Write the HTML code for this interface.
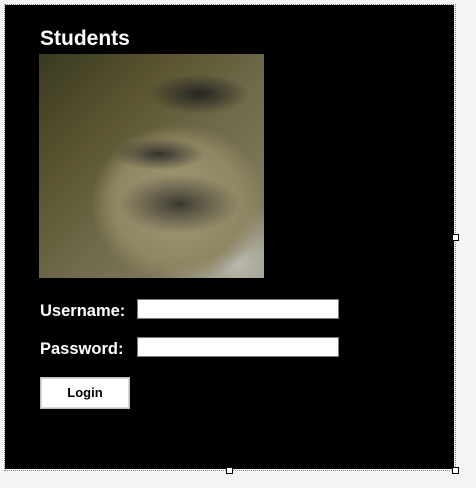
<!DOCTYPE html>
<html><head><meta charset="utf-8"><style>
html,body{margin:0;padding:0;}
body{width:476px;height:488px;background:#f4f4f4;position:relative;overflow:hidden;font-family:"Liberation Sans",Arial,sans-serif;}
.frame{position:absolute;left:4px;top:4px;width:450px;height:465px;border:1px dotted #888;}
.panel{position:absolute;left:5px;top:5px;width:449px;height:464px;background:#000;}
.h{position:absolute;left:40px;top:27px;color:#fff;font-weight:bold;font-size:21px;}
.img{position:absolute;left:39px;top:54px;width:225px;height:224px;
background:
radial-gradient(ellipse 60px 30px at 140px 150px, rgba(40,40,35,.85), transparent),
radial-gradient(ellipse 50px 20px at 160px 40px, rgba(30,30,30,.9), transparent),
radial-gradient(ellipse 45px 16px at 120px 100px, rgba(35,35,32,.85), transparent),
radial-gradient(ellipse 110px 100px at 140px 150px, #a59a78 0%, #8f8563 60%, transparent 80%),
radial-gradient(ellipse 80px 60px at 200px 210px, #b9b9b0, transparent),
linear-gradient(135deg,#3a3a22 0%,#5a5430 30%,#6f6a4a 55%,#8a8466 100%);}
.l{position:absolute;left:40px;color:#fff;font-weight:bold;font-size:16.5px;}
.in{position:absolute;left:137px;width:200px;height:18px;background:#fff;border:1px solid #7a7a7a;}
.btn{position:absolute;left:40px;top:377px;width:90px;height:32px;background:#fff;border:2px solid #d8d8d8;outline:1px solid #bdbdbd;outline-offset:-1px;box-sizing:border-box;text-align:center;line-height:28px;font-weight:bold;font-size:13px;color:#000;}
.hd{position:absolute;width:5px;height:5px;background:#fff;border:1px solid #000;}
</style></head><body>
<div class="frame"></div>
<div class="panel"></div>
<div class="h">Students</div>
<div class="img"></div>
<div class="l" style="top:302px">Username:</div>
<div class="in" style="top:299px"></div>
<div class="l" style="top:340px">Password:</div>
<div class="in" style="top:337px"></div>
<div class="btn">Login</div>
<div class="hd" style="left:452px;top:234px"></div>
<div class="hd" style="left:226px;top:467px"></div>
<div class="hd" style="left:452px;top:467px"></div>
</body></html>
